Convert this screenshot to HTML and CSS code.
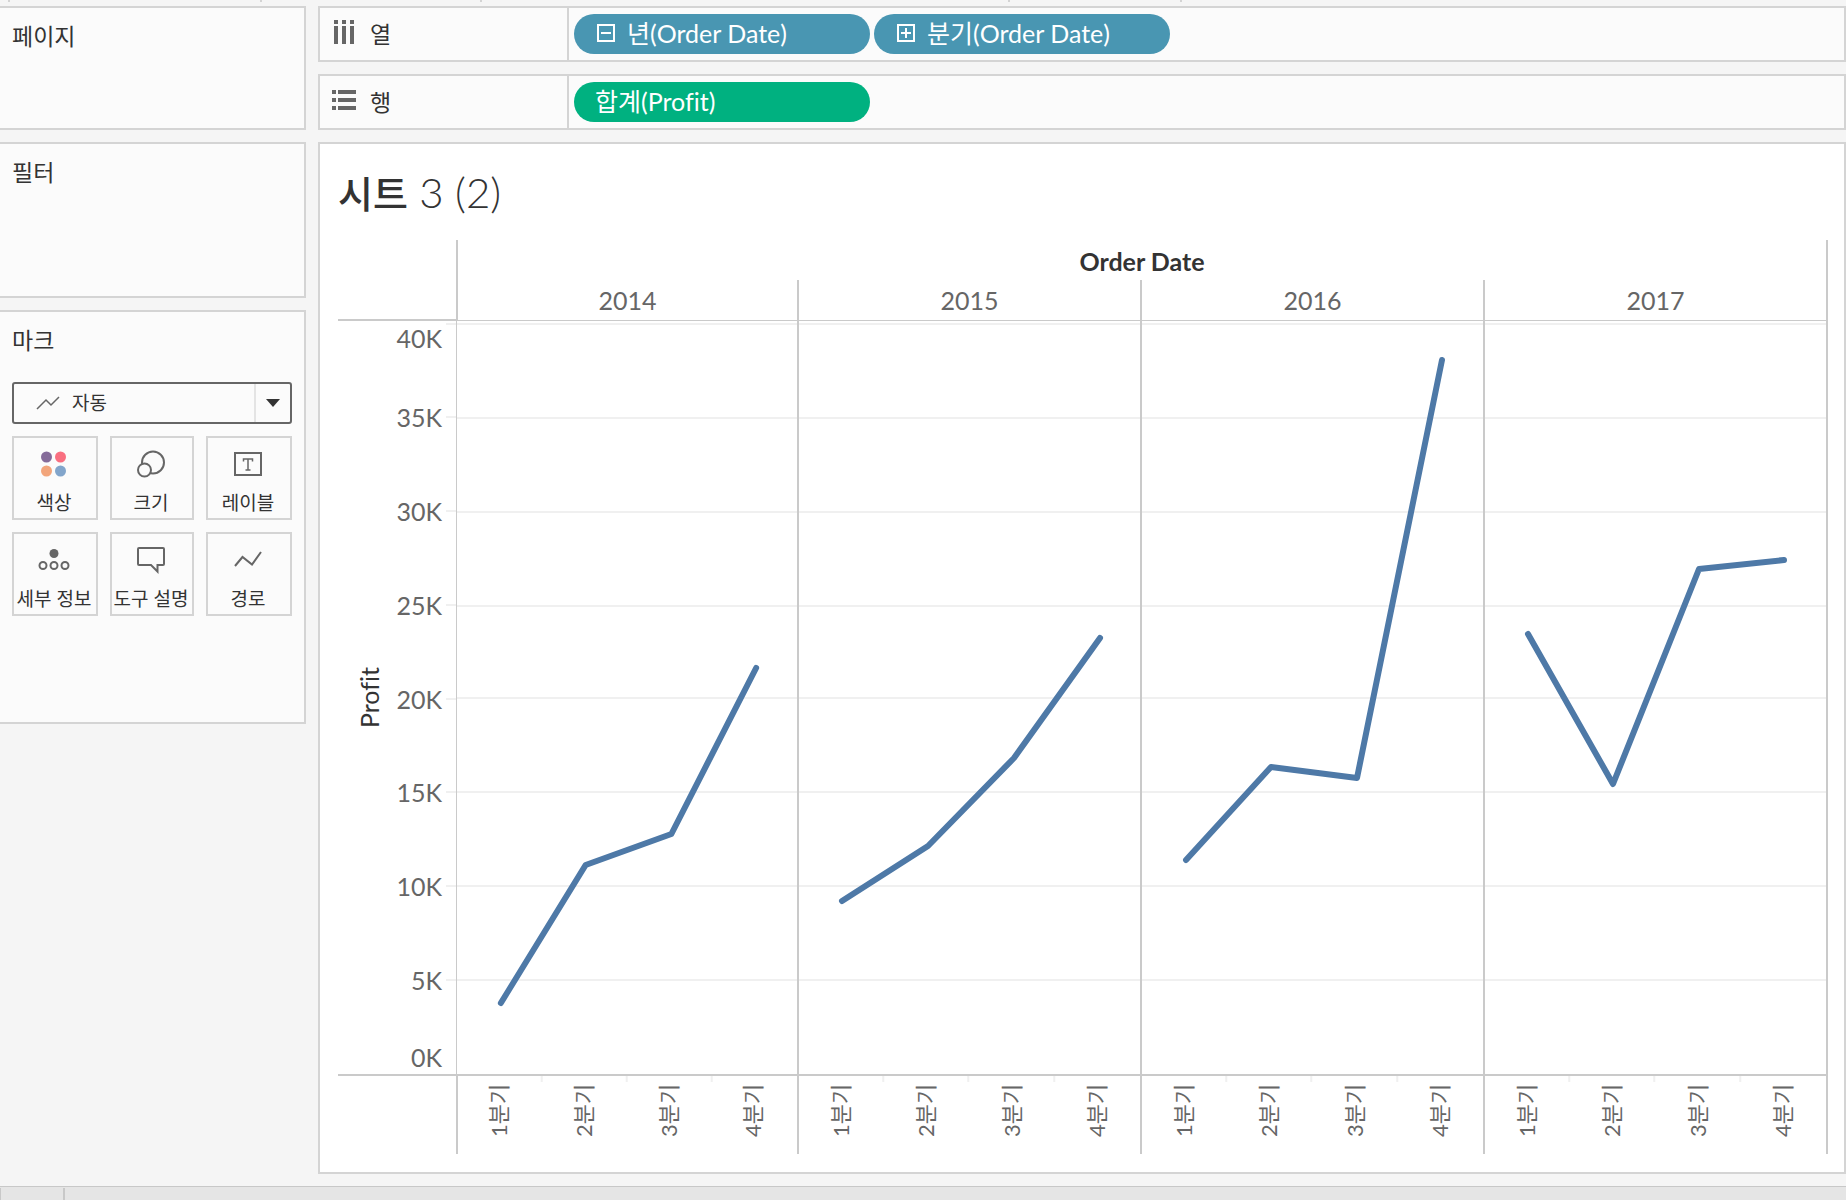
FILE: index.html
```html
<!DOCTYPE html>
<html lang="ko">
<head>
  <meta charset="UTF-8" />
  <meta name="viewport" content="width=device-width, initial-scale=1" />
  <title>시트 3 (2)</title>
  <link rel="stylesheet" href="styles.css">
</head>
<body>
  <div class="ruler"><i></i><i></i><i></i><i></i><i></i></div>

  <div class="workspace">
    <aside class="side">
      <section class="card pages"><h2>페이지</h2></section>
      <section class="card filters"><h2>필터</h2></section>
      <section class="card marks">
        <h2 id="marksTitle">마크</h2>
        <div class="mark-type">
          <svg width="24" height="14" viewBox="0 0 24 14"><path d="M1 13 L10 4 L15 9 L23 1" fill="none" stroke="#666" stroke-width="1.500"/></svg>
          <select aria-labelledby="marksTitle">
            <option>자동</option>
          </select>
          <span class="arrow"><svg width="14" height="8" viewBox="0 0 14 8"><path d="M0 0H14L7 8Z" fill="#333"/></svg></span>
        </div>
        <div class="mark-grid">
          <button type="button">
            <svg width="28" height="28" viewBox="0 0 28 28">
              <circle cx="6.500" cy="7" r="5.500" fill="#856b99"/><circle cx="20.500" cy="7" r="5.500" fill="#f96f80"/>
              <circle cx="6.500" cy="21" r="5.500" fill="#f2a57b"/><circle cx="20.500" cy="21" r="5.500" fill="#82a5cb"/>
            </svg>
            색상
          </button>
          <button type="button">
            <svg width="28" height="28" viewBox="0 0 28 28" stroke="#666" stroke-width="2">
              <circle cx="16" cy="12.500" r="11" fill="none"/><circle cx="7.500" cy="20" r="6.500" fill="#fbfbfb"/>
            </svg>
            크기
          </button>
          <button type="button">
            <svg width="28" height="28" viewBox="0 0 28 28" fill="none" stroke="#666">
              <rect x="1" y="3" width="26" height="22" stroke-width="2"/>
              <path d="M9.500 11.500V9H18.500V11.500M14 9V20M11.500 20H16.500" stroke-width="1.500"/>
            </svg>
            레이블
          </button>
          <button type="button">
            <svg width="32" height="28" viewBox="0 0 32 28" fill="none" stroke="#666" stroke-width="2">
              <circle cx="16" cy="7.500" r="4.500" fill="#666" stroke="none"/>
              <circle cx="5" cy="19.500" r="3.500"/><circle cx="16" cy="19.500" r="3.500"/><circle cx="27" cy="19.500" r="3.500"/>
            </svg>
            세부 정보
          </button>
          <button type="button">
            <svg width="28" height="28" viewBox="0 0 28 28"><path d="M2 2H26Q27 2 27 3V18Q27 19 26 19H20.500V25.500L14 19H2Q1 19 1 18V3Q1 2 2 2Z" fill="none" stroke="#666" stroke-width="2"/></svg>
            도구 설명
          </button>
          <button type="button">
            <svg width="28" height="28" viewBox="0 0 28 28"><path d="M1 20L8.500 11L18 18.500L27 6" fill="none" stroke="#666" stroke-width="2"/></svg>
            경로
          </button>
        </div>
      </section>
    </aside>

    <main class="main">
      <div class="shelf">
        <div class="shelf-name">
          <svg width="24" height="28" viewBox="0 0 24 28" fill="#666"><path d="M2 0h4v4H2zM10 0h4v4h-4zM18 0h4v4h-4zM2 6h4v18H2zM10 6h4v18h-4zM18 6h4v18h-4z"/></svg>
          열
        </div>
        <div class="pills">
          <button type="button" class="pill">
            <svg width="20" height="18" viewBox="0 0 20 18" fill="none" stroke="#fff" stroke-width="2"><path d="M3 1H19V17H3ZM6 9H16"/></svg>
            년(Order Date)
          </button>
          <button type="button" class="pill">
            <svg width="20" height="18" viewBox="0 0 20 18" fill="none" stroke="#fff" stroke-width="2"><path d="M3 1H19V17H3ZM6 9H16M11 4V14"/></svg>
            분기(Order Date)
          </button>
        </div>
      </div>

      <div class="shelf">
        <div class="shelf-name">
          <svg width="24" height="24" viewBox="0 0 24 24" fill="#666"><path d="M0 0h4v4H0zM6 0h18v4H6zM0 8h4v4H0zM6 8h18v4H6zM0 16h4v4H0zM6 16h18v4H6z"/></svg>
          행
        </div>
        <div class="pills">
          <button type="button" class="pill measure">합계(Profit)</button>
        </div>
      </div>

      <section class="view">
        <h1><span>시트</span> 3 (2)</h1>
        <div class="chart">
          <div class="corner"></div>
          <div class="field">Order Date</div>
          <div class="year">2014</div>
          <div class="year">2015</div>
          <div class="year">2016</div>
          <div class="year">2017</div>

          <div class="axis">
            <div class="axis-title">Profit</div>
            <ul class="scale">
              <li>40K</li><li>35K</li><li>30K</li><li>25K</li><li>20K</li>
              <li>15K</li><li>10K</li><li>5K</li><li>0K</li>
            </ul>
          </div>
          <div class="pane">
            <svg viewBox="0 0 341 753" preserveAspectRatio="none">
              <path class="grid" d="M0 3H341M0 97H341M0 191H341M0 285H341M0 377H341M0 471H341M0 565H341M0 659H341"/>
              <polyline class="line" points="44,682 129,544 215,513 300,347"/>
            </svg>
          </div>
          <div class="pane">
            <svg viewBox="0 0 341 753" preserveAspectRatio="none">
              <path class="grid" d="M0 3H341M0 97H341M0 191H341M0 285H341M0 377H341M0 471H341M0 565H341M0 659H341"/>
              <polyline class="line" points="43,580 129,525 215,437 301,317"/>
            </svg>
          </div>
          <div class="pane">
            <svg viewBox="0 0 341 753" preserveAspectRatio="none">
              <path class="grid" d="M0 3H341M0 97H341M0 191H341M0 285H341M0 377H341M0 471H341M0 565H341M0 659H341"/>
              <polyline class="line" points="44,539 129,446 215,457 300,39"/>
            </svg>
          </div>
          <div class="pane">
            <svg viewBox="0 0 341 753" preserveAspectRatio="none">
              <path class="grid" d="M0 3H341M0 97H341M0 191H341M0 285H341M0 377H341M0 471H341M0 565H341M0 659H341"/>
              <polyline class="line" points="43,313 128,463 214,248 299,239"/>
            </svg>
          </div>

          <div class="foot"></div>
          <div class="quarters"><span>1분기</span><span>2분기</span><span>3분기</span><span>4분기</span></div>
          <div class="quarters"><span>1분기</span><span>2분기</span><span>3분기</span><span>4분기</span></div>
          <div class="quarters"><span>1분기</span><span>2분기</span><span>3분기</span><span>4분기</span></div>
          <div class="quarters"><span>1분기</span><span>2분기</span><span>3분기</span><span>4분기</span></div>
        </div>
      </section>
    </main>
  </div>

  <footer class="tabs"><div class="tab"></div></footer>
</body>
</html>
```
FILE: styles.css
```css
* {
  box-sizing: border-box;
}

body {
  margin: 0;
  height: 100vh;
  min-height: 800px;
  display: flex;
  flex-direction: column;
  background: #f5f5f5;
  color: #333;
  font-family: Lato, "Noto Sans CJK KR", sans-serif;
  font-size: 23px;
  font-variant-ligatures: none;
  line-height: 28px;
}

h1, h2, ul {
  margin: 0;
  padding: 0;
  font-weight: 400;
}

svg {
  display: block;
  flex: none;
}

button, select {
  font: inherit;
  font-variant-ligatures: none;
  color: inherit;
  cursor: pointer;
}

/* bottom edge of the toolbar separators */
.ruler {
  height: 2px;
  margin-bottom: 4px;
  display: grid;
  grid-template-columns: 252px 220px 528px 172px 2px;
  padding-left: 8px;
}

.ruler i {
  width: 2px;
  background: #d4d4d4;
}

.workspace {
  flex: 1;
  min-height: 0;
  display: grid;
  grid-template-columns: 306px 1fr;
  gap: 12px;
}

/* left cards */
.side {
  display: flex;
  flex-direction: column;
  gap: 12px;
}

.card {
  border: 2px solid #d4d4d4;
  border-left: none;
  background: #fbfbfb;
  padding: 14px 12px;
}

.card h2 {
  font-size: 23px;
  line-height: 28px;
}

.pages { height: 124px; }
.filters { height: 156px; }
.marks { height: 414px; }

.mark-type {
  display: flex;
  align-items: center;
  height: 42px;
  margin-top: 28px;
  padding-left: 22px;
  border: 2px solid #666;
  border-radius: 3px;
}

.mark-type select {
  flex: 1;
  height: 100%;
  padding: 0 12px;
  border: none;
  background: none;
  appearance: none;
  font-size: 19px;
}

.arrow {
  display: flex;
  align-items: center;
  justify-content: center;
  width: 36px;
  height: 100%;
  border-left: 2px solid #e4e4e4;
  pointer-events: none;
}

.mark-grid {
  display: grid;
  grid-template-columns: 43fr 42fr 43fr;
  gap: 12px;
  margin-top: 12px;
}

.mark-grid button {
  display: flex;
  flex-direction: column;
  align-items: center;
  gap: 11px;
  height: 84px;
  padding: 12px 2px 0 0;
  border: 2px solid #d4d4d4;
  background: #fbfbfb;
  font-size: 19px;
  line-height: 28px;
  white-space: nowrap;
}

/* shelves */
.main {
  min-width: 0;
  display: flex;
  flex-direction: column;
  gap: 12px;
}

.shelf {
  display: flex;
  height: 56px;
  border: 2px solid #d4d4d4;
  background: #fbfbfb;
}

.shelf-name {
  display: flex;
  align-items: center;
  gap: 14px;
  width: 249px;
  padding-left: 12px;
  border-right: 2px solid #d4d4d4;
}

.pills {
  display: flex;
  align-items: center;
  gap: 4px;
  padding-left: 5px;
}

.pill {
  display: flex;
  align-items: center;
  gap: 12px;
  width: 296px;
  height: 40px;
  padding: 0 21px 2px;
  border: none;
  border-radius: 20px;
  background: #4996b2;
  color: #fff;
  font-size: 25px;
  white-space: nowrap;
}

.measure {
  background: #00b180;
}

/* worksheet */
.view {
  flex: 1;
  min-height: 0;
  display: flex;
  flex-direction: column;
  padding: 22px 16px 18px 18px;
  border: 2px solid #d4d4d4;
  background: #fff;
}

.view h1 {
  height: 74px;
  font-size: 42px;
  font-weight: 300;
  line-height: 52px;
}

.view h1 span {
  font-size: 38px;
  font-weight: 500;
}

.chart {
  flex: 1;
  min-height: 0;
  display: grid;
  grid-template-columns: 118px repeat(4, 1fr);
  grid-template-rows: 40px 41px 1fr 78px;
  color: #666;
  font-size: 25px;
}

.corner {
  grid-row: span 2;
  border-bottom: 2px solid #cacaca;
}

.field {
  grid-column: span 4;
  padding-top: 7px;
  border: solid #cacaca;
  border-width: 0 2px;
  color: #333;
  font-weight: 700;
  text-align: center;
}

.year {
  padding-top: 6px;
  border: solid #cacaca;
  border-width: 0 2px 1px 0;
  text-align: center;
}

.field + .year,
.foot + .quarters {
  border-left-width: 2px;
}

.axis {
  display: flex;
  align-items: center;
  justify-content: space-between;
  min-height: 0;
  border-bottom: 2px solid #cacaca;
}

.axis-title {
  margin-left: 17px;
  writing-mode: vertical-rl;
  transform: rotate(180deg);
  color: #333;
}

.scale {
  display: grid;
  grid-template-rows: 1fr repeat(7, 2fr) 1fr;
  height: 100%;
  padding-top: 2px;
  list-style: none;
}

.scale li {
  display: flex;
  align-items: center;
  justify-content: flex-end;
  gap: 4px;
  min-height: 0;
}

.scale li::after {
  content: "";
  width: 10px;
  height: 2px;
  background: #f0f0f0;
}

.scale li:first-child {
  align-items: flex-start;
  line-height: 30px;
}

.scale li:last-child {
  align-items: flex-end;
  line-height: 34px;
}

.scale li:last-child::after {
  background: none;
}

.pane {
  min-height: 0;
  border: solid #cacaca;
  border-width: 0 2px 2px 0;
}

.axis + .pane {
  border-left-width: 1px;
}

.pane svg {
  width: 100%;
  height: 100%;
}

.grid, .line {
  fill: none;
  vector-effect: non-scaling-stroke;
}

.grid {
  stroke: #f0f0f0;
  stroke-width: 2px;
}

.line {
  stroke: #4e79a7;
  stroke-width: 6px;
  stroke-linecap: round;
  stroke-linejoin: round;
}

.quarters {
  display: grid;
  grid-template-columns: repeat(4, 1fr);
  border: solid #cacaca;
  border-width: 0 2px 0 0;
  font-size: 22px;
}

.quarters span {
  display: flex;
  align-items: center;
  justify-content: flex-end;
  padding: 0 0 8px 2px;
  writing-mode: vertical-rl;
  text-orientation: sideways;
  transform: rotate(180deg);
  background: linear-gradient(#f0f0f0, #f0f0f0) left bottom / 2px 6px no-repeat;
}

.quarters span:last-child {
  background: none;
}

/* sheet tabs */
.tabs {
  height: 14px;
  margin-top: 12px;
  padding-top: 1px;
  border-top: 1px solid #c8c8c8;
  background: #e5e5e5;
}

.tab {
  width: 65px;
  height: 100%;
  border: solid #c8c8c8;
  border-width: 0 2px 0 1px;
}
```
